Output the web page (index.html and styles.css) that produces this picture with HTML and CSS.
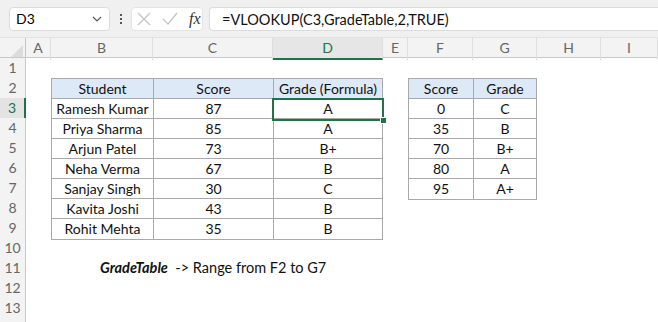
FILE: index.html
```html
<!DOCTYPE html>
<html lang="en">
<head>
	<meta charset="UTF-8">
	<title>VLOOKUP grades</title>
	<link rel="stylesheet" href="styles.css">
</head>
<body>
	<div class="bar">
		<div class="namebox">
			<span>D3</span>
			<svg width="10" height="6" viewBox="0 0 10 6"><path d="M1 1 L5 5 L9 1" fill="none" stroke="#555" stroke-width="1.2"/></svg>
		</div>
		<div class="dots"><i></i><i></i><i></i></div>
		<div class="fxbtns">
			<svg width="14" height="14" viewBox="0 0 14 14"><path d="M1 1 L13 13 M13 1 L1 13" stroke="#c4c4c4" stroke-width="1.2"/></svg>
			<svg width="16" height="14" viewBox="0 0 16 14"><path d="M1 7 L6 12 L15 1" fill="none" stroke="#c4c4c4" stroke-width="1.2"/></svg>
			<span class="fx">fx</span>
		</div>
		<div class="formula">=VLOOKUP(C3,GradeTable,2,TRUE)</div>
	</div>

	<div class="sheet">
		<div class="row head">
			<div class="corner"><svg width="12" height="12" viewBox="0 0 12 12"><path d="M12 0 L12 12 L0 12 Z" fill="#dcdcdc"/></svg></div>
			<div class="ch">A</div><div class="ch">B</div><div class="ch">C</div><div class="ch sel">D</div><div class="ch">E</div><div class="ch">F</div><div class="ch">G</div><div class="ch">H</div><div class="ch">I</div>
		</div>
		<div class="row">
			<div class="rh">1</div>
		</div>
		<div class="row">
			<div class="rh">2</div><div></div><div class="t th">Student</div><div class="t th">Score</div><div class="t th end">Grade (Formula)</div><div></div><div class="t th">Score</div><div class="t th end">Grade</div><div></div><div></div>
		</div>
		<div class="row">
			<div class="rh rsel">3</div><div></div><div class="t">Ramesh Kumar</div><div class="t">87</div><div class="t end active">A<span class="handle"></span></div><div></div><div class="t">0</div><div class="t end">C</div><div></div><div></div>
		</div>
		<div class="row">
			<div class="rh">4</div><div></div><div class="t">Priya Sharma</div><div class="t">85</div><div class="t end">A</div><div></div><div class="t">35</div><div class="t end">B</div><div></div><div></div>
		</div>
		<div class="row">
			<div class="rh">5</div><div></div><div class="t">Arjun Patel</div><div class="t">73</div><div class="t end">B+</div><div></div><div class="t">70</div><div class="t end">B+</div><div></div><div></div>
		</div>
		<div class="row">
			<div class="rh">6</div><div></div><div class="t">Neha Verma</div><div class="t">67</div><div class="t end">B</div><div></div><div class="t">80</div><div class="t end">A</div><div></div><div></div>
		</div>
		<div class="row">
			<div class="rh">7</div><div></div><div class="t">Sanjay Singh</div><div class="t">30</div><div class="t end">C</div><div></div><div class="t bottom">95</div><div class="t end bottom">A+</div><div></div><div></div>
		</div>
		<div class="row">
			<div class="rh">8</div><div></div><div class="t">Kavita Joshi</div><div class="t">43</div><div class="t end">B</div><div></div><div></div><div></div><div></div><div></div>
		</div>
		<div class="row">
			<div class="rh">9</div><div></div><div class="t bottom">Rohit Mehta</div><div class="t bottom">35</div><div class="t end bottom">B</div><div></div><div></div><div></div><div></div><div></div>
		</div>
		<div class="row">
			<div class="rh">10</div>
		</div>
		<div class="row">
			<div class="rh">11</div><div></div><div class="note"><b>GradeTable</b>&nbsp; -&gt; Range from F2 to G7</div>
		</div>
		<div class="row">
			<div class="rh">12</div>
		</div>
		<div class="row">
			<div class="rh">13</div>
		</div>
		<div class="row">
			<div class="rh"></div>
		</div>
	</div>
</body>
</html>
```

FILE: styles.css
```css
body{
	margin: 0;
	font-family: Lato, "Liberation Sans", sans-serif;
	background: white;
	overflow: hidden;
}
.bar{
	display: flex;
	align-items: center;
	height: 38px;
	padding: 0 0 0 9px;
	background: #f0f0f0;
	box-sizing: border-box;
	border-bottom: 1px solid #e2e2e2;
}
.namebox{
	display: flex;
	align-items: center;
	justify-content: space-between;
	width: 101px;
	height: 24px;
	padding: 0 7px 0 6px;
	box-sizing: border-box;
	background: white;
	border: solid 1px #dcdcdc;
	border-radius: 4px;
	font-size: 14px;
}
.dots{
	display: flex;
	flex-direction: column;
	gap: 2px;
	margin: 0 9px 0 10px;
}
.dots i{
	display: block;
	width: 2px;
	height: 2px;
	background: #555;
}
.fxbtns{
	display: flex;
	align-items: center;
	gap: 11px;
	width: 72px;
	height: 24px;
	padding-left: 5px;
	box-sizing: border-box;
	background: white;
	border: solid 1px #e4e4e4;
	border-radius: 4px;
}
.fx{
	font-family: "Liberation Serif", serif;
	font-style: italic;
	font-size: 16px;
	color: #333;
}
.formula{
	flex: 1;
	height: 24px;
	margin-left: 6px;
	padding-left: 12px;
	box-sizing: border-box;
	line-height: 23px;
	background: white;
	border: solid 1px #dcdcdc;
	border-right: none;
	border-radius: 4px 0 0 4px;
	font-size: 14.5px;
	color: #111;
}
.row{
	display: grid;
	grid-template-columns: 26px 25px 102px 120px 110px 25px 65px 64px 64px 57px;
	height: 20px;
}
.row > div{
	box-sizing: border-box;
	font-size: 14px;
	line-height: 20px;
	text-align: center;
	white-space: nowrap;
}
.head{
	background: #f3f3f3;
	border-bottom: 1px solid #c8c8c8;
	box-sizing: border-box;
}
.head .ch{
	border-right: 1px solid #dedede;
	color: #666;
}
.head .sel{
	background: #e6e6e6;
	color: #217346;
	border-bottom: 2px solid #217346;
}
.corner{
	display: flex;
	align-items: flex-end;
	justify-content: flex-end;
	padding: 0 2px 3px 0;
	border-right: 1px solid #c8c8c8;
}
.rh{
	background: #f3f3f3;
	border-right: 1px solid #c8c8c8;
	border-bottom: 1px solid #e0e0e0;
	color: #666;
}
.rh.rsel{
	background: #e3e3e3;
	color: #217346;
	border-right: 2px solid #217346;
}
.t{
	border-left: 1px solid #a9a9a9;
	border-top: 1px solid #a9a9a9;
	color: #111;
}
.t.end{
	border-right: 1px solid #a9a9a9;
}
.t.bottom{
	border-bottom: 1px solid #a9a9a9;
}
.th{
	background: #dde9f7;
}
.active{
	position: relative;
}
.active::after{
	content: "";
	position: absolute;
	left: -2px;
	top: -1px;
	right: -2px;
	bottom: -2px;
	border: 2px solid #217346;
}
.handle{
	position: absolute;
	right: -5px;
	bottom: -5px;
	width: 5px;
	height: 5px;
	background: #217346;
	border: 1px solid white;
	z-index: 1;
}
.note{
	grid-column: 3 / 9;
	text-align: left !important;
	padding-left: 49px;
	font-size: 14.5px !important;
	color: #111;
}
.note b{
	font-style: italic;
}
```
